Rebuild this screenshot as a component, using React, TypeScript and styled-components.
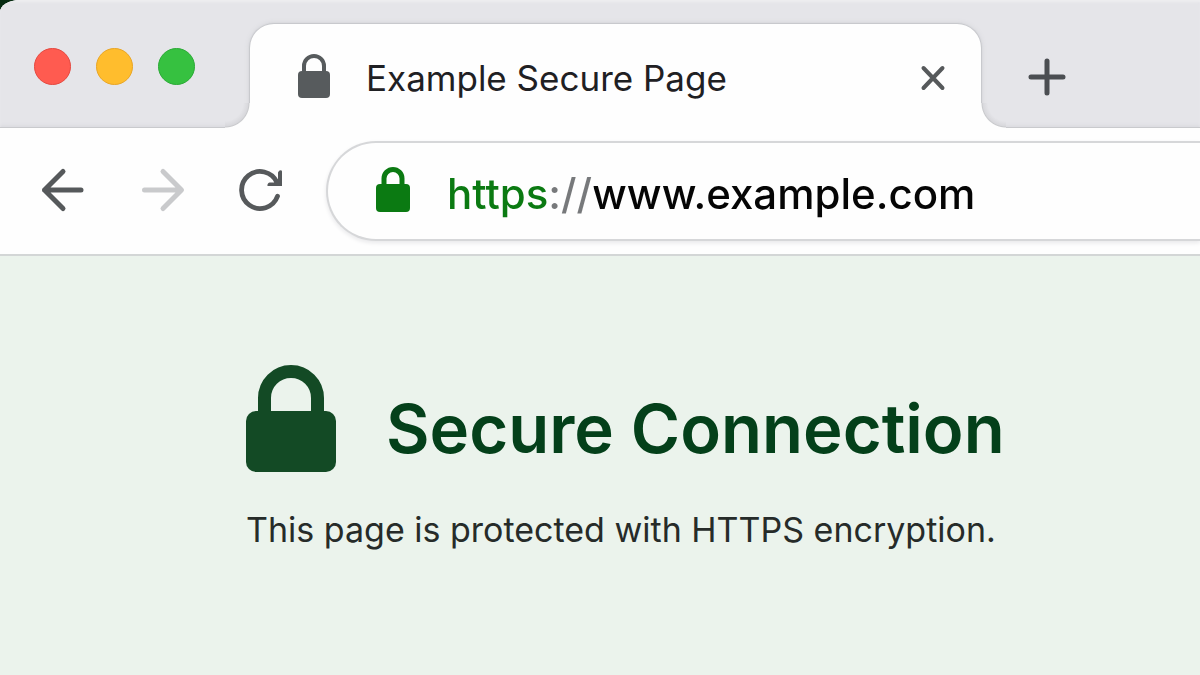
import React from "react";
import styled, { createGlobalStyle } from "styled-components";

const GlobalStyle = createGlobalStyle`
  *, *::before, *::after { box-sizing: border-box; }
  body {
    margin: 0;
    background: #062a10;
    font-family: Inter, "Liberation Sans", sans-serif;
  }
`;

const Window = styled.div`
  display: flex;
  flex-direction: column;
  min-height: 100vh;
  overflow: hidden;
  border-top-left-radius: 20px 12px;
  background: #fefefe;
`;

const TabStrip = styled.header`
  display: flex;
  align-items: flex-end;
  height: 128px;
  padding-left: 34px;
  background: #e5e5e9;
  border-bottom: 1px solid #c9cacd;
  box-shadow: inset 0 2px 2px #eeeef0, inset 0 -3px 3px -1px #dcdce1;
`;

const WindowControls = styled.div`
  display: flex;
  gap: 25px;
  margin-right: 55px;
  padding-bottom: 42px;
`;

const Light = styled.button<{ $fill: string; $edge: string }>`
  width: 37px;
  height: 37px;
  padding: 0;
  border: 1px solid ${(p) => p.$edge};
  border-radius: 50%;
  background: ${(p) => p.$fill};
`;

const Tab = styled.div`
  position: relative;
  display: flex;
  align-items: center;
  flex: 0 1 731px;
  min-width: 0;
  height: 104px;
  margin-bottom: -1px;
  padding: 4px 32px 0 48px;
  border-radius: 24px 24px 0 0;
  background: #fefefe;
  box-shadow: 0 0 1px 1px #c6c7cb, 0 0 5px 1px #d2d3d7;
  clip-path: inset(-8px -30px 0 -30px);

  &::before,
  &::after {
    content: "";
    position: absolute;
    bottom: 0;
    width: 25px;
    height: 25px;
  }
  &::before {
    right: 100%;
    background: radial-gradient(circle at 0 0, #e5e5e9 18px, #d8d8dc 23px, #c9cacd 24px, #fefefe 25px);
  }
  &::after {
    left: 100%;
    background: radial-gradient(circle at 100% 0, #e5e5e9 18px, #d8d8dc 23px, #c9cacd 24px, #fefefe 25px);
  }
`;

const TabTitle = styled.span`
  flex: 1;
  min-width: 0;
  margin-left: 36px;
  overflow: hidden;
  color: #1f2023;
  font-size: 35px;
  line-height: 48px;
  white-space: nowrap;
`;

const LockSlot = styled.span`
  display: flex;
  flex: none;
  padding-bottom: 4px;
`;

const IconButton = styled.button<{ $color?: string }>`
  display: flex;
  flex: none;
  padding: 0;
  border: 0;
  background: none;
  color: ${(p) => p.$color ?? "#56595b"};
`;

const NewTabButton = styled(IconButton)`
  margin: 0 0 30px 46px;
`;

const Toolbar = styled.nav`
  display: flex;
  align-items: center;
  height: 128px;
  padding-left: 40px;
  border-bottom: 2px solid #d3d6d6;
`;

const NavButtons = styled.div`
  display: flex;
  gap: 52px;
  margin-right: 38px;
  padding-bottom: 2px;
`;

const ReloadIcon = styled.svg`
  overflow: visible;
`;

const AddressBar = styled.label`
  display: flex;
  align-items: center;
  flex: 1;
  min-width: 0;
  height: 100px;
  padding-left: 48px;
  border: 2px solid #d6d7d9;
  border-right: 0;
  border-radius: 50px 0 0 50px;
  background: #fefefe;
  box-shadow: 0 2px 4px #e8e8ea;
`;

/* The scheme, the separator and the host each take their own colour. */
const AddressInput = styled.input`
  flex: 1;
  min-width: 0;
  height: 64px;
  margin-left: 37px;
  padding: 4px 0 0;
  border: 0;
  outline: 0;
  background: linear-gradient(to right, #0b7a12 102px, #77797b 102px 147px, #050505 147px);
  background-clip: text;
  color: #050505;
  -webkit-text-fill-color: transparent;
  font: 500 42px/60px Inter, "Liberation Sans", sans-serif;
`;

const Page = styled.main`
  flex: 1;
  padding: 109px 40px 80px 246px;
  background: #ebf3ec;
`;

const Heading = styled.div`
  display: flex;
  align-items: flex-end;
  gap: 50px;
`;

const Title = styled.h1`
  margin: 0;
  color: #04401a;
  font-size: 67px;
  font-weight: 600;
  line-height: 86px;
`;

const Message = styled.p`
  margin: 34px 0 0;
  color: #262b29;
  font-size: 34px;
  line-height: 48px;
`;

type LockProps = {
  width: number;
  height: number;
  bodyTop: number;
  radius: number;
  stroke: number;
  span: number;
  color: string;
};

function Lock({ width, height, bodyTop, radius, stroke, span, color }: LockProps) {
  const r = (span - stroke) / 2;
  const left = width / 2 - r;
  const shoulder = r + stroke / 2;
  return (
    <svg width={width} height={height} viewBox={`0 0 ${width} ${height}`} aria-hidden="true">
      <rect y={bodyTop} width={width} height={height - bodyTop} rx={radius} fill={color} />
      <path
        d={`M${left} ${bodyTop + 2}V${shoulder}a${r} ${r} 0 0 1 ${2 * r} 0V${bodyTop + 2}`}
        fill="none"
        stroke={color}
        strokeWidth={stroke}
      />
    </svg>
  );
}

function Stroke({ size, width, d }: { size: number; width: number; d: string }) {
  return (
    <svg
      width={size}
      height={size}
      viewBox={`0 0 ${size} ${size}`}
      fill="none"
      stroke="currentColor"
      strokeWidth={width}
      strokeLinecap="round"
      strokeLinejoin="round"
      aria-hidden="true"
    >
      <path d={d} />
    </svg>
  );
}

export default function App() {
  return (
    <>
      <GlobalStyle />
      <Window>
        <TabStrip>
          <WindowControls>
            <Light aria-label="Close window" $fill="#ff5b50" $edge="#e5483f" />
            <Light aria-label="Minimize window" $fill="#ffbd2d" $edge="#e9a524" />
            <Light aria-label="Zoom window" $fill="#36c140" $edge="#2baa36" />
          </WindowControls>
          <Tab>
            <LockSlot>
              <Lock width={32} height={44} bodyTop={17} radius={4} stroke={4} span={24} color="#575b5d" />
            </LockSlot>
            <TabTitle>Example Secure Page</TabTitle>
            <IconButton aria-label="Close tab">
              <Stroke size={32} width={4} d="M6.500 6L25.500 26M25.500 6L6.500 26" />
            </IconButton>
          </Tab>
          <NewTabButton aria-label="New tab" $color="#4b4e52">
            <Stroke size={40} width={5} d="M20 4V36M4 20H36" />
          </NewTabButton>
        </TabStrip>
        <Toolbar>
          <NavButtons>
            <IconButton aria-label="Back">
              <Stroke size={48} width={5} d="M41 24H4.500M23 5.500L4.500 24L23 42.500" />
            </IconButton>
            <IconButton aria-label="Forward" $color="#c9cacc">
              <Stroke size={48} width={5} d="M4.500 24H41M23 5.500L41.500 24L23 42.500" />
            </IconButton>
            <IconButton aria-label="Reload">
              <ReloadIcon width="48" height="48" viewBox="0 0 48 48" fill="none" aria-hidden="true">
                <path
                  d="M37.500 30.300A18.500 18.500 0 1 1 37 16.500"
                  stroke="currentColor"
                  strokeWidth="4.800"
                  strokeLinecap="round"
                />
                <path
                  d="M42 5.500Q42 4.200 40.500 4.200T38 6.500V13L34 16.500H29.500Q27 17.500 27.500 20H42Z"
                  fill="currentColor"
                />
              </ReloadIcon>
            </IconButton>
          </NavButtons>
          <AddressBar>
            <LockSlot>
              <Lock width={34} height={45} bodyTop={17} radius={4} stroke={5} span={23} color="#0b7a12" />
            </LockSlot>
            <AddressInput aria-label="Address" defaultValue="https://www.example.com" spellCheck={false} />
          </AddressBar>
        </Toolbar>
        <Page>
          <Heading>
            <Lock width={90} height={107} bodyTop={46} radius={10} stroke={13} span={66} color="#134a25" />
            <Title>Secure Connection</Title>
          </Heading>
          <Message>This page is protected with HTTPS encryption.</Message>
        </Page>
      </Window>
    </>
  );
}
